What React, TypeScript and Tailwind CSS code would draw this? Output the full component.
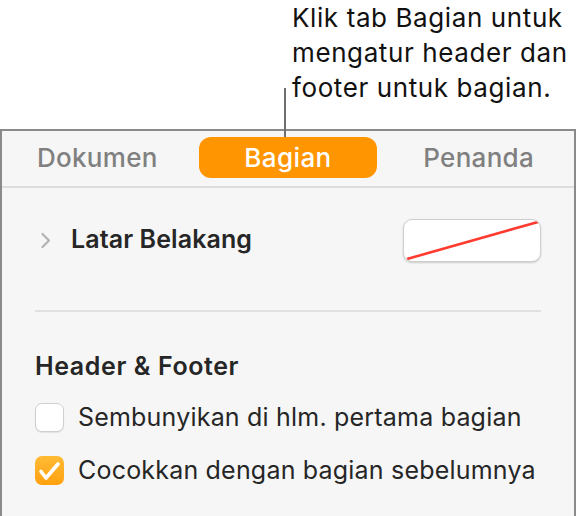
import React from "react";

export default function App() {
  return (
    <div
      className="relative w-[583px] h-[516px] bg-white flex flex-col overflow-hidden"
      style={{ fontFamily: "Inter, 'Noto Sans', sans-serif" }}
    >
      {/* Callout */}
      <div className="pl-[292px] text-[26px] leading-[35px] text-[#111111] h-[129px] tracking-[0.6px]">
        <div>Klik tab Bagian untuk</div>
        <div>mengatur header dan</div>
        <div>footer untuk bagian.</div>
      </div>
      <div className="absolute left-[284px] top-[88px] w-[2px] h-[49px] bg-[#6e6e6e] z-10" />

      {/* Panel */}
      <div className="w-[576px] flex-1 bg-[#f6f6f6] border-l-2 border-t-2 border-r-2 border-[#8a8a8a] flex flex-col">
        {/* Tabs */}
        <div className="grid grid-cols-3 gap-[12px] px-[6px] pt-[6px] pb-[8px] border-b-2 border-[#dddddd]">
          <div className="h-[41px] flex items-center justify-center text-[26px] tracking-[0.3px] font-medium text-[#808080]">
            Dokumen
          </div>
          <div className="h-[41px] flex items-center justify-center rounded-[12px] bg-[#ff9500] text-[26px] tracking-[0.4px] font-medium text-white">
            Bagian
          </div>
          <div className="h-[41px] flex items-center justify-center text-[26px] tracking-[0.3px] font-medium text-[#808080]">
            Penanda
          </div>
        </div>

        {/* Content */}
        <div className="px-[33px] flex flex-col">
          <div className="flex items-center justify-between pt-[30px] h-[74px]">
            <div className="flex items-center">
              <svg width="12" height="17" viewBox="0 0 12 17" className="ml-[5px] mr-[19px]">
                <path d="M2.5 2 L9 8.5 L2.5 15" fill="none" stroke="#b3b3b3" strokeWidth="2.2" strokeLinecap="round" strokeLinejoin="round" />
              </svg>
              <span className="text-[25px] tracking-[0.1px] font-semibold text-[#262626]">Latar Belakang</span>
            </div>
            <div className="relative w-[138px] h-[43px] rounded-[9px] bg-white border border-[#cfcfcf] shadow-[0_1px_2px_rgba(0,0,0,0.18)] overflow-hidden">
              <svg className="absolute inset-0" width="136" height="41" viewBox="0 0 136 41">
                <line x1="3" y1="39" x2="134" y2="2" stroke="#ff3b30" strokeWidth="2.6" />
              </svg>
            </div>
          </div>

          <div className="mt-[48px] h-[2px] bg-[#e0e0e0]" />

          <div className="mt-[41px] h-[28px] flex items-center text-[25px] tracking-[0.6px] font-semibold text-[#262626]">
            Header &amp; Footer
          </div>

          <div className="mt-[22px] h-[29px] flex items-center gap-[14px]">
            <div className="w-[29px] h-[29px] shrink-0 rounded-[7px] bg-white border border-[#cfcfcf] shadow-[0_1px_1px_rgba(0,0,0,0.08)]" />
            <span className="text-[25px] tracking-[0.2px] text-[#262626] whitespace-nowrap">Sembunyikan di hlm. pertama bagian</span>
          </div>

          <div className="mt-[24px] h-[29px] flex items-center gap-[14px]">
            <div className="w-[29px] h-[29px] shrink-0 rounded-[7px] bg-gradient-to-b from-[#ffbb33] to-[#ffa00a] flex items-center justify-center">
              <svg width="29" height="29" viewBox="0 0 29 29">
                <path d="M6 15.5 L11 22 L23 8" fill="none" stroke="white" strokeWidth="3.6" strokeLinecap="round" strokeLinejoin="round" />
              </svg>
            </div>
            <span className="text-[25px] tracking-[0.2px] text-[#262626] whitespace-nowrap">Cocokkan dengan bagian sebelumnya</span>
          </div>
        </div>
      </div>
    </div>
  );
}
